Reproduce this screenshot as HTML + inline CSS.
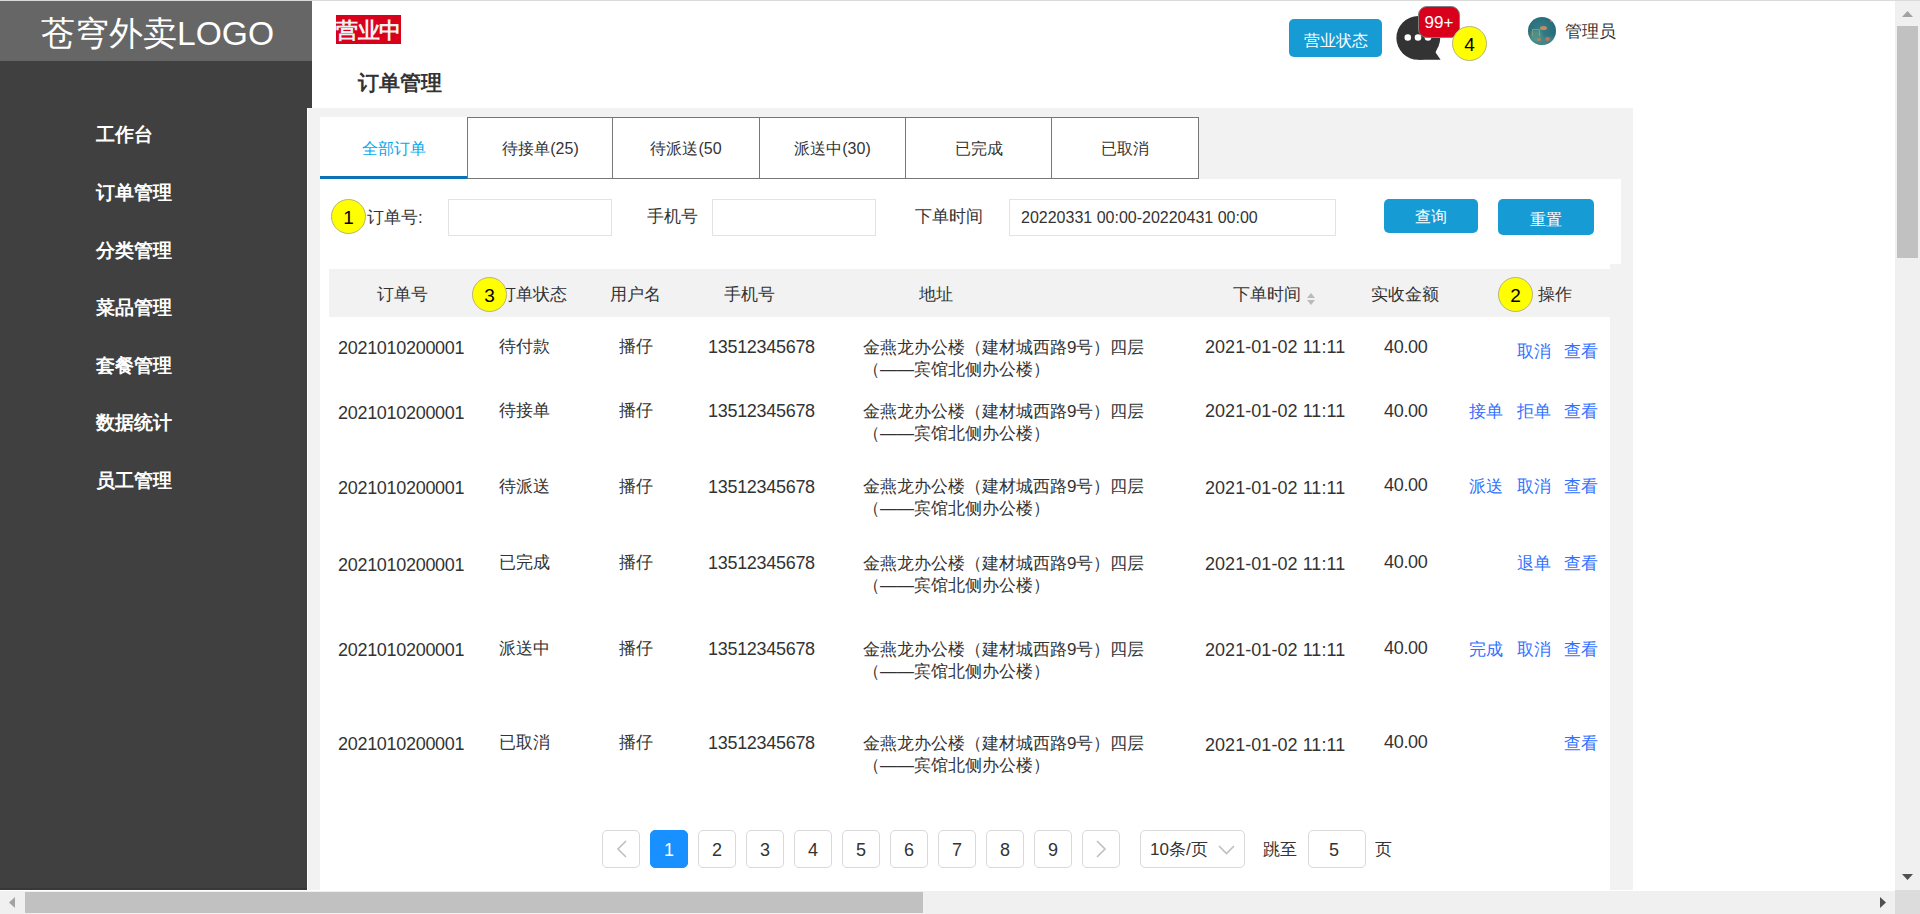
<!DOCTYPE html>
<html><head><meta charset="utf-8"><title>订单管理</title>
<style>
*{box-sizing:border-box}
html,body{margin:0;padding:0}
body{width:1920px;height:914px;overflow:hidden;position:relative;background:#fff;font-family:"Liberation Sans",sans-serif;color:#333}
.a{position:absolute;white-space:nowrap}
.topline{left:0;top:0;width:1920px;height:1px;background:#dadada}
.logo{left:0;top:1px;width:312px;height:60px;background:#666;color:#fff;font-size:33.6px;line-height:66px;padding-left:41px}
.side{left:0;top:61px;width:312px;height:829px;background:#404040}
.sideedge{left:307px;top:108px;width:1px;height:782px;background:#fff}
.sidebot{left:0;top:888px;width:307px;height:2px;background:#383838}
.menu{left:96px;color:#fff;font-size:19px;font-weight:bold;line-height:26px}
.gray{left:308px;top:108px;width:1325px;height:782px;background:#f2f2f2}
.white{background:#fff}
.badge-open{left:336px;top:15px;width:65px;height:29px;background:#d9001b;color:#f2f2f2;font-size:22px;font-weight:bold;line-height:31px;text-align:center;letter-spacing:-0.5px}
.title{left:358px;top:70px;font-size:21px;font-weight:bold;color:#333;line-height:26px}
.btn{background:#169bd5;color:#fff;border-radius:5px;text-align:center;font-size:16px}
.mark{width:35px;height:35px;border-radius:50%;background:#ff0;border:1px solid #b5b57a;color:#000;font-size:19px;text-align:center;line-height:36px}
.tab{top:117px;height:62px;border:1px solid #777;background:#fff;font-size:16px;line-height:62px;text-align:center;color:#333}
.lbl{font-size:17px;color:#333;line-height:20px}
.inp{top:199px;height:37px;border:1px solid #e3e3e3;background:#fff}
.th{font-size:17px;color:#333;line-height:20px}
.td{font-size:17px;color:#333;line-height:20px}
.num{font-size:18px;letter-spacing:-0.3px}
.lnk{font-size:17px;color:#3370ff;line-height:20px}
.pg{top:830px;width:38px;height:38px;border:1px solid #d9d9d9;border-radius:5px;background:#fff;text-align:center;line-height:38px;font-size:18px;color:#333}
.sb{background:#f0f0f0}
</style></head>
<body>
<div class="a topline"></div>
<div class="a logo">苍穹外卖LOGO</div>
<div class="a side"></div>
<div class="a sidebot"></div>
<div class="a gray"></div>
<div class="a sideedge"></div>

<div class="a menu" style="top:122px">工作台</div>
<div class="a menu" style="top:180px">订单管理</div>
<div class="a menu" style="top:238px">分类管理</div>
<div class="a menu" style="top:295px">菜品管理</div>
<div class="a menu" style="top:353px">套餐管理</div>
<div class="a menu" style="top:410px">数据统计</div>
<div class="a menu" style="top:468px">员工管理</div>

<!-- header -->
<div class="a badge-open">营业中</div>
<div class="a title">订单管理</div>
<div class="a btn" style="left:1289px;top:19px;width:93px;height:38px;line-height:43px">营业状态</div>


<svg class="a" style="left:1396px;top:16px" width="46" height="45" viewBox="0 0 46 45">
<circle cx="22.3" cy="21.9" r="21.9" fill="#333"/>
<path d="M22.3 21.9 L41.5 30 L39.6 36.6 L44.6 43.8 L22.3 43.8 Z" fill="#333"/>
<circle cx="11.8" cy="21.5" r="3.3" fill="#fff"/>
<circle cx="22" cy="21.5" r="3.3" fill="#fff"/>
<circle cx="32" cy="21.5" r="3.3" fill="#fff"/>
</svg>
<div class="a" style="left:1418px;top:6px;width:42px;height:32px;border-radius:9px;background:#d9001b;border:1px solid #7f7f7f;color:#fff;font-size:17px;line-height:32px;text-align:center">99+</div>
<div class="a mark" style="left:1452px;top:26px">4</div>
<div class="a" style="left:1528px;top:17px;width:28px;height:28px;border-radius:50%;overflow:hidden;background:radial-gradient(circle at 45% 45%,#347f86 0,#2a7180 50%,#22606c 100%)">
<div style="position:absolute;left:2px;top:13px;width:12px;height:12px;border-radius:40%;background:#6fa38f;opacity:.55;filter:blur(1.5px)"></div>
<div style="position:absolute;left:0px;top:20px;width:28px;height:10px;background:#4f9a90;opacity:.6;filter:blur(2px)"></div>
<div style="position:absolute;left:12px;top:9px;width:7px;height:4px;border-radius:50%;background:#c98a5e;filter:blur(.6px)"></div>
<div style="position:absolute;left:17px;top:20px;width:5px;height:4px;border-radius:50%;background:#c96d58;filter:blur(.5px)"></div>
<div style="position:absolute;left:9px;top:21px;width:4px;height:3px;border-radius:50%;background:#c8785a;filter:blur(.5px)"></div>
<div style="position:absolute;left:22px;top:2px;width:4px;height:3px;border-radius:50%;background:#c98060;filter:blur(.6px)"></div>
<div style="position:absolute;left:4px;top:12px;width:8px;height:7px;border:1px solid #c9b070;border-bottom:none;opacity:.5;filter:blur(.4px)"></div>
</div>
<div class="a" style="left:1565px;top:22px;font-size:17px;line-height:20px;color:#333">管理员</div>

<!-- tabs -->
<div class="a white" style="left:320px;top:117px;width:147px;height:62px"></div>
<div class="a" style="left:320px;top:117px;width:147px;height:59px;line-height:64px;text-align:center;font-size:16px;color:#02a7f0">全部订单</div>
<div class="a" style="left:320px;top:176px;width:147px;height:3px;background:#0b72b5"></div>
<div class="a tab" style="left:467px;width:147px">待接单(25)</div>
<div class="a tab" style="left:612px;width:148px">待派送(50</div>
<div class="a tab" style="left:759px;width:147px">派送中(30)</div>
<div class="a tab" style="left:905px;width:147px">已完成</div>
<div class="a tab" style="left:1051px;width:148px">已取消</div>

<!-- search -->
<div class="a white" style="left:320px;top:179px;width:1301px;height:85px"></div>
<div class="a lbl" style="left:367px;top:208px">订单号:</div>
<div class="a inp" style="left:448px;width:164px"></div>
<div class="a lbl" style="left:647px;top:207px">手机号</div>
<div class="a inp" style="left:712px;width:164px"></div>
<div class="a lbl" style="left:915px;top:207px">下单时间</div>
<div class="a inp" style="left:1009px;width:327px;font-size:16px;line-height:35px;padding-left:11px;color:#333">20220331 00:00-20220431 00:00</div>
<div class="a btn" style="left:1384px;top:199px;width:94px;height:34px;line-height:36px">查询</div>
<div class="a btn" style="left:1498px;top:199px;width:96px;height:36px;line-height:41px">重置</div>
<div class="a mark" style="left:331px;top:199px">1</div>

<!-- table -->
<div class="a white" style="left:320px;top:264px;width:1290px;height:626px"></div>
<div class="a" style="left:329px;top:269px;width:1281px;height:48px;background:#f2f2f2"></div>
<div class="a th" style="left:377px;top:285px">订单号</div>
<div class="a th" style="left:499px;top:285px">订单状态</div>
<div class="a th" style="left:610px;top:285px">用户名</div>
<div class="a th" style="left:724px;top:285px">手机号</div>
<div class="a th" style="left:919px;top:285px">地址</div>
<div class="a th" style="left:1233px;top:285px">下单时间</div>
<svg class="a" style="left:1306px;top:292px" width="10" height="14" viewBox="0 0 10 14"><path d="M5 1 L9 6 L1 6 Z" fill="#bababa"/><path d="M1 8 L9 8 L5 13 Z" fill="#bababa"/></svg>
<div class="a th" style="left:1371px;top:285px">实收金额</div>
<div class="a th" style="left:1538px;top:285px">操作</div>
<div class="a mark" style="left:472px;top:277px">3</div>
<div class="a mark" style="left:1498px;top:277px">2</div>
<div class="a td num" style="left:338px;top:338px">2021010200001</div>
<div class="a td" style="left:499px;top:337px">待付款</div>
<div class="a td" style="left:619px;top:337px">播仔</div>
<div class="a td num" style="left:708px;top:337px">13512345678</div>
<div class="a td" style="left:863px;top:337px;line-height:22px">金燕龙办公楼（建材城西路9号）四层<br>（——宾馆北侧办公楼）</div>
<div class="a td num" style="letter-spacing:0.05px;left:1205px;top:337px">2021-01-02 11:11</div>
<div class="a td num" style="left:1384px;top:337px">40.00</div>
<div class="a lnk" style="left:1517px;top:342px">取消</div>
<div class="a lnk" style="left:1564px;top:342px">查看</div>
<div class="a td num" style="left:338px;top:403px">2021010200001</div>
<div class="a td" style="left:499px;top:401px">待接单</div>
<div class="a td" style="left:619px;top:401px">播仔</div>
<div class="a td num" style="left:708px;top:401px">13512345678</div>
<div class="a td" style="left:863px;top:401px;line-height:22px">金燕龙办公楼（建材城西路9号）四层<br>（——宾馆北侧办公楼）</div>
<div class="a td num" style="letter-spacing:0.05px;left:1205px;top:401px">2021-01-02 11:11</div>
<div class="a td num" style="left:1384px;top:401px">40.00</div>
<div class="a lnk" style="left:1469px;top:402px">接单</div>
<div class="a lnk" style="left:1517px;top:402px">拒单</div>
<div class="a lnk" style="left:1564px;top:402px">查看</div>
<div class="a td num" style="left:338px;top:478px">2021010200001</div>
<div class="a td" style="left:499px;top:477px">待派送</div>
<div class="a td" style="left:619px;top:477px">播仔</div>
<div class="a td num" style="left:708px;top:477px">13512345678</div>
<div class="a td" style="left:863px;top:476px;line-height:22px">金燕龙办公楼（建材城西路9号）四层<br>（——宾馆北侧办公楼）</div>
<div class="a td num" style="letter-spacing:0.05px;left:1205px;top:478px">2021-01-02 11:11</div>
<div class="a td num" style="left:1384px;top:475px">40.00</div>
<div class="a lnk" style="left:1469px;top:477px">派送</div>
<div class="a lnk" style="left:1517px;top:477px">取消</div>
<div class="a lnk" style="left:1564px;top:477px">查看</div>
<div class="a td num" style="left:338px;top:555px">2021010200001</div>
<div class="a td" style="left:499px;top:553px">已完成</div>
<div class="a td" style="left:619px;top:553px">播仔</div>
<div class="a td num" style="left:708px;top:553px">13512345678</div>
<div class="a td" style="left:863px;top:553px;line-height:22px">金燕龙办公楼（建材城西路9号）四层<br>（——宾馆北侧办公楼）</div>
<div class="a td num" style="letter-spacing:0.05px;left:1205px;top:554px">2021-01-02 11:11</div>
<div class="a td num" style="left:1384px;top:552px">40.00</div>
<div class="a lnk" style="left:1517px;top:554px">退单</div>
<div class="a lnk" style="left:1564px;top:554px">查看</div>
<div class="a td num" style="left:338px;top:640px">2021010200001</div>
<div class="a td" style="left:499px;top:639px">派送中</div>
<div class="a td" style="left:619px;top:639px">播仔</div>
<div class="a td num" style="left:708px;top:639px">13512345678</div>
<div class="a td" style="left:863px;top:639px;line-height:22px">金燕龙办公楼（建材城西路9号）四层<br>（——宾馆北侧办公楼）</div>
<div class="a td num" style="letter-spacing:0.05px;left:1205px;top:640px">2021-01-02 11:11</div>
<div class="a td num" style="left:1384px;top:638px">40.00</div>
<div class="a lnk" style="left:1469px;top:640px">完成</div>
<div class="a lnk" style="left:1517px;top:640px">取消</div>
<div class="a lnk" style="left:1564px;top:640px">查看</div>
<div class="a td num" style="left:338px;top:734px">2021010200001</div>
<div class="a td" style="left:499px;top:733px">已取消</div>
<div class="a td" style="left:619px;top:733px">播仔</div>
<div class="a td num" style="left:708px;top:733px">13512345678</div>
<div class="a td" style="left:863px;top:733px;line-height:22px">金燕龙办公楼（建材城西路9号）四层<br>（——宾馆北侧办公楼）</div>
<div class="a td num" style="letter-spacing:0.05px;left:1205px;top:735px">2021-01-02 11:11</div>
<div class="a td num" style="left:1384px;top:732px">40.00</div>
<div class="a lnk" style="left:1564px;top:734px">查看</div>
<!-- pagination -->
<div class="a pg" style="left:602px"><svg width="36" height="36" style="position:absolute;left:0;top:0"><path d="M23 10 L15 18 L23 26" fill="none" stroke="#bfbfbf" stroke-width="1.6"/></svg></div>
<div class="a pg" style="left:650px;background:#1890ff;border-color:#1890ff;color:#fff">1</div>
<div class="a pg" style="left:698px">2</div>
<div class="a pg" style="left:746px">3</div>
<div class="a pg" style="left:794px">4</div>
<div class="a pg" style="left:842px">5</div>
<div class="a pg" style="left:890px">6</div>
<div class="a pg" style="left:938px">7</div>
<div class="a pg" style="left:986px">8</div>
<div class="a pg" style="left:1034px">9</div>
<div class="a pg" style="left:1082px"><svg width="36" height="36" style="position:absolute;left:0;top:0"><path d="M14 10 L22 18 L14 26" fill="none" stroke="#bfbfbf" stroke-width="1.6"/></svg></div>
<div class="a pg" style="left:1140px;width:105px;text-align:left;padding-left:9px;font-size:17px">10条/页<svg width="18" height="12" style="position:absolute;left:77px;top:13px"><path d="M1 2 L8.5 9.5 L16 2" fill="none" stroke="#bfbfbf" stroke-width="1.6"/></svg></div>
<div class="a" style="left:1263px;top:840px;font-size:17px;line-height:20px;color:#333">跳至</div>
<div class="a pg" style="left:1308px;width:58px;text-align:left;padding-left:20px">5</div>
<div class="a" style="left:1375px;top:840px;font-size:17px;line-height:20px;color:#333">页</div>
<!-- scrollbars -->
<div class="a sb" style="left:1895px;top:1px;width:25px;height:889px"></div>
<div class="a" style="left:1897px;top:26px;width:21px;height:232px;background:#c1c1c1"></div>
<svg class="a" style="left:1895px;top:1px" width="25" height="25"><path d="M7 16 L12.5 10 L18 16 Z" fill="#a3a3a3"/></svg>
<svg class="a" style="left:1895px;top:865px" width="25" height="25"><path d="M7 9 L12.5 15 L18 9 Z" fill="#505050"/></svg>
<div class="a" style="left:0;top:890px;width:1895px;height:1px;background:#fff"></div>
<div class="a sb" style="left:0;top:891px;width:1895px;height:23px"></div>
<div class="a" style="left:25px;top:892px;width:898px;height:21px;background:#c1c1c1"></div>
<svg class="a" style="left:0;top:891px" width="25" height="23"><path d="M15 6 L9 11.5 L15 17 Z" fill="#a3a3a3"/></svg>
<svg class="a" style="left:1870px;top:891px" width="25" height="23"><path d="M10 6 L16 11.5 L10 17 Z" fill="#505050"/></svg>
<div class="a" style="left:1895px;top:890px;width:25px;height:24px;background:#dcdcdc"></div>
</body></html>
